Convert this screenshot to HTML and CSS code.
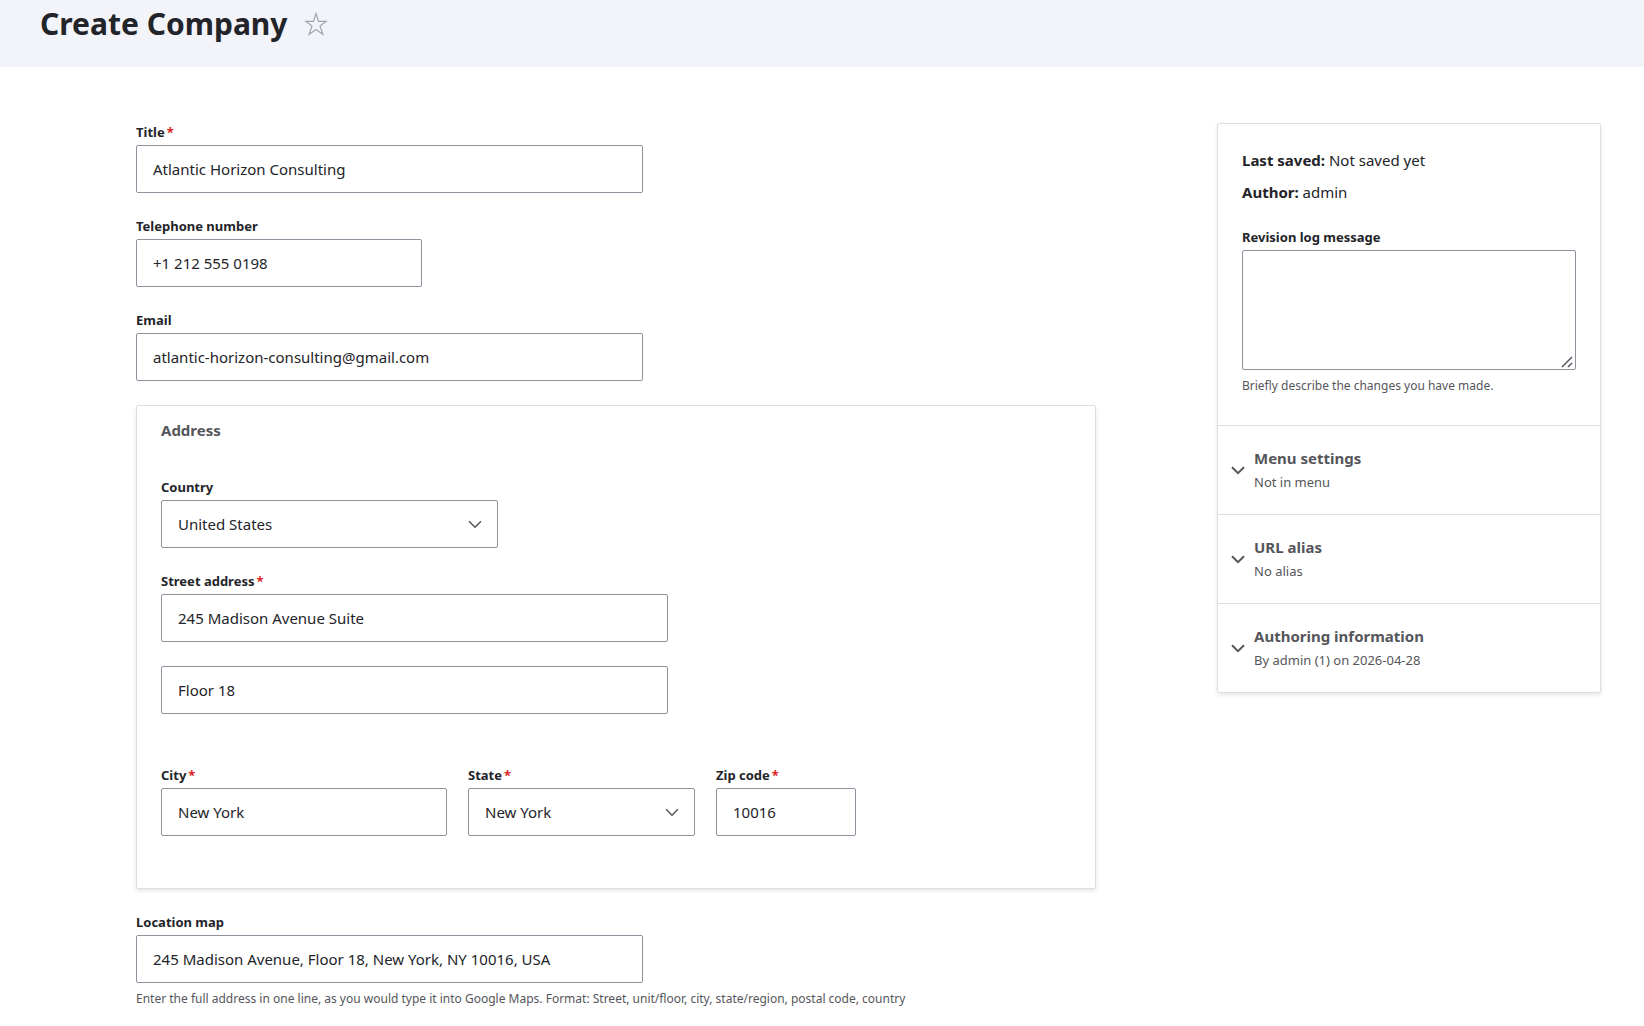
FILE: index.html
```html
<!DOCTYPE html>
<html lang="en">
<head>
    <meta charset="UTF-8">
    <meta name="viewport" content="width=device-width, initial-scale=1.0">
    <title>Create Company</title>
    <link rel="stylesheet" href="styles.css">
</head>
<body>

    <header class="content-header">
        <h1 class="page-title">Create Company</h1>
        <button type="button" class="shortcut" aria-label="Add to shortcuts">
            <svg width="24" height="24" viewBox="0 0 24 24" fill="none" stroke="#a3a4aa" stroke-width="1.2">
                <path d="M12 1.6 L14.5 9.3 H22.4 L16 14 L18.9 22.4 L12 17.5 L5.1 22.4 L8 14 L1.6 9.3 H9.5 Z"/>
            </svg>
        </button>
    </header>

    <form class="node-form">
        <main class="region-main">
            <div class="form-item">
                <label class="label required" for="title">Title</label>
                <input class="input input-wide" type="text" id="title" value="Atlantic Horizon Consulting">
            </div>
            <div class="form-item">
                <label class="label" for="phone">Telephone number</label>
                <input class="input input-medium" type="tel" id="phone" value="+1 212 555 0198">
            </div>
            <div class="form-item">
                <label class="label" for="email">Email</label>
                <input class="input input-wide" type="email" id="email" value="atlantic-horizon-consulting@gmail.com">
            </div>

            <section class="fieldset" aria-labelledby="address-title">
                <h2 class="fieldset-title" id="address-title">Address</h2>
                <div class="form-item">
                    <label class="label" for="country">Country</label>
                    <select class="input select input-country" id="country">
                        <option>United States</option>
                    </select>
                </div>
                <div class="form-item">
                    <label class="label required" for="street">Street address</label>
                    <input class="input input-wide" type="text" id="street" value="245 Madison Avenue Suite">
                </div>
                <div class="form-item">
                    <input class="input input-wide" type="text" aria-label="Street address line 2" value="Floor 18">
                </div>
                <div class="address-row">
                    <div class="address-cell">
                        <label class="label required" for="city">City</label>
                        <input class="input input-medium" type="text" id="city" value="New York">
                    </div>
                    <div class="address-cell">
                        <label class="label required" for="state">State</label>
                        <select class="input select input-state" id="state">
                            <option>New York</option>
                        </select>
                    </div>
                    <div class="address-cell">
                        <label class="label required" for="zip">Zip code</label>
                        <input class="input input-zip" type="text" id="zip" value="10016">
                    </div>
                </div>
            </section>

            <div class="form-item">
                <label class="label" for="map">Location map</label>
                <input class="input input-wide" type="text" id="map" value="245 Madison Avenue, Floor 18, New York, NY 10016, USA">
                <p class="description">Enter the full address in one line, as you would type it into Google Maps. Format: Street, unit/floor, city, state/region, postal code, country</p>
            </div>
        </main>

        <aside class="region-side">
            <div class="meta">
                <p class="meta-line"><strong>Last saved:</strong> Not saved yet</p>
                <p class="meta-line"><strong>Author:</strong> admin</p>
                <div class="revision">
                    <label class="label" for="revision">Revision log message</label>
                    <textarea class="input textarea" id="revision"></textarea>
                    <p class="description">Briefly describe the changes you have made.</p>
                </div>
            </div>
            <details class="panel">
                <summary class="panel-summary">
                    <svg class="chevron" width="14" height="9" viewBox="0 0 14 9" fill="none" stroke="#55565b" stroke-width="2">
                        <path d="M1 1.2 L7 7.2 L13 1.2"/>
                    </svg>
                    <span class="panel-text">
                        <span class="panel-title">Menu settings</span>
                        <span class="panel-note">Not in menu</span>
                    </span>
                </summary>
            </details>
            <details class="panel">
                <summary class="panel-summary">
                    <svg class="chevron" width="14" height="9" viewBox="0 0 14 9" fill="none" stroke="#55565b" stroke-width="2">
                        <path d="M1 1.2 L7 7.2 L13 1.2"/>
                    </svg>
                    <span class="panel-text">
                        <span class="panel-title">URL alias</span>
                        <span class="panel-note">No alias</span>
                    </span>
                </summary>
            </details>
            <details class="panel">
                <summary class="panel-summary">
                    <svg class="chevron" width="14" height="9" viewBox="0 0 14 9" fill="none" stroke="#55565b" stroke-width="2">
                        <path d="M1 1.2 L7 7.2 L13 1.2"/>
                    </svg>
                    <span class="panel-text">
                        <span class="panel-title">Authoring information</span>
                        <span class="panel-note">By admin (1) on 2026-04-28</span>
                    </span>
                </summary>
            </details>
        </aside>
    </form>

</body>
</html>
```

FILE: styles.css
```css
* {
    box-sizing: border-box;
}

body {
    margin: 0;
    background: #fff;
    color: #232429;
    font-family: 'Segoe UI', 'Noto Sans', sans-serif;
    font-size: 15px;
    line-height: 24px;
}

p, h1, h2 {
    margin: 0;
}

/* Header */
.content-header {
    display: flex;
    align-items: center;
    gap: 16px;
    padding: 4px 40px 23px;
    background: #f3f4f9;
}

.page-title {
    font-size: 30px;
    line-height: 40px;
}

.shortcut {
    display: flex;
    padding: 0;
    border: 0;
    background: none;
    cursor: pointer;
}

/* Layout */
.node-form {
    display: grid;
    grid-template-columns: minmax(0, 1fr) 384px;
    align-items: start;
    gap: 25px;
    padding: 56px 43px 0 40px;
}

.region-main {
    display: flex;
    flex-direction: column;
    gap: 24px;
    width: 100%;
    max-width: 960px;
    margin: 0 auto;
}

/* Form elements */
.label {
    display: block;
    margin-bottom: 4px;
    font-size: 13px;
    font-weight: bold;
    line-height: 18px;
}

.required::after {
    content: "*";
    margin-left: 2px;
    color: #dc2323;
}

.input {
    display: block;
    width: 100%;
    height: 48px;
    padding: 0 16px;
    border: 1px solid #8e929c;
    border-radius: 2px;
    background: #fff;
    color: #232429;
    font-family: inherit;
    font-size: 15px;
    line-height: 24px;
}

.input-wide {
    max-width: 507px;
}

.input-medium {
    max-width: 286px;
}

.input-country {
    max-width: 337px;
}

.input-state {
    width: 227px;
}

.input-zip {
    width: 140px;
}

.select {
    appearance: none;
    background: #fff url("data:image/svg+xml,%3Csvg xmlns='http://www.w3.org/2000/svg' width='14' height='9' fill='none' stroke='%2355565b' stroke-width='1.5'%3E%3Cpath d='M1 1.2L7 7.2L13 1.2'/%3E%3C/svg%3E") no-repeat right 15px center;
}

.textarea {
    height: 120px;
    padding: 12px 16px;
    resize: vertical;
}

.textarea::-webkit-resizer {
    background: url("data:image/svg+xml,%3Csvg xmlns='http://www.w3.org/2000/svg' width='15' height='15' fill='none' stroke='%2355565b' stroke-width='1.5'%3E%3Cpath d='M2 13L12 3M8 13L12 9'/%3E%3C/svg%3E") no-repeat right bottom;
}

.description {
    margin-top: 7px;
    color: #55565b;
    font-size: 12px;
    line-height: 18px;
}

/* Address box */
.fieldset {
    display: flex;
    flex-direction: column;
    gap: 24px;
    padding: 12px 24px 52px;
    border: 1px solid #dedfe4;
    border-radius: 2px;
    box-shadow: 0 2px 4px rgba(0, 0, 0, 0.1);
}

.fieldset-title {
    margin-bottom: 12px;
    color: #55565b;
    font-size: 15px;
    line-height: 24px;
}

.address-row {
    display: flex;
    gap: 21px;
    margin-top: 28px;
}

.address-cell .input-medium {
    width: 286px;
}

/* Sidebar */
.region-side {
    border: 1px solid #dedfe4;
    border-radius: 2px;
    box-shadow: 0 2px 4px rgba(0, 0, 0, 0.1);
}

.meta {
    padding: 24px 24px 30px;
}

.meta-line {
    margin-bottom: 8px;
}

.revision {
    margin-top: 24px;
}

.panel {
    border-top: 1px solid #dedfe4;
}

.panel-summary {
    display: flex;
    align-items: center;
    gap: 9px;
    padding: 20px 13px;
    color: #55565b;
    cursor: pointer;
    list-style: none;
}

.panel-title {
    display: block;
    font-weight: bold;
}

.panel-note {
    display: block;
    font-size: 13px;
}
```
